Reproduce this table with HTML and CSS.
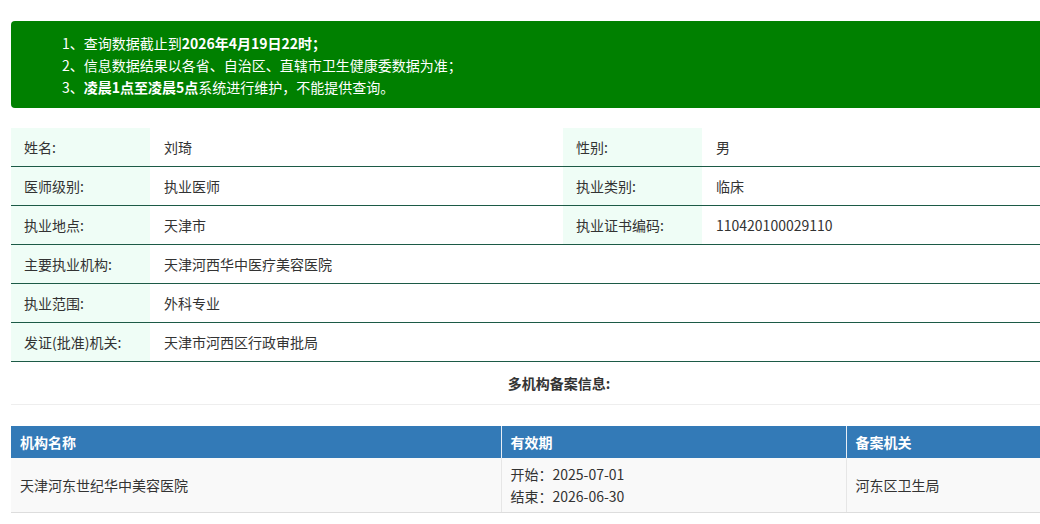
FILE: index.html
```html
<!DOCTYPE html>
<html lang="zh-CN">
<head>
<meta charset="utf-8">
<title>医师执业信息查询</title>
<link rel="stylesheet" href="styles.css">
</head>
<body>
<div class="page">
  <div class="notice">
    <div class="notice-line">1、查询数据截止到<b>2026年4月19日22时；</b></div>
    <div class="notice-line">2、信息数据结果以各省、自治区、直辖市卫生健康委数据为准；</div>
    <div class="notice-line">3、<b>凌晨1点至凌晨5点</b>系统进行维护，不能提供查询。</div>
  </div>

  <table class="info">
    <colgroup>
      <col class="c-label"><col class="c-val1"><col class="c-label"><col class="c-val2">
    </colgroup>
    <tr>
      <td class="lbl">姓名:</td><td class="val">刘琦</td>
      <td class="lbl">性别:</td><td class="val">男</td>
    </tr>
    <tr>
      <td class="lbl">医师级别:</td><td class="val">执业医师</td>
      <td class="lbl">执业类别:</td><td class="val">临床</td>
    </tr>
    <tr>
      <td class="lbl">执业地点:</td><td class="val">天津市</td>
      <td class="lbl">执业证书编码:</td><td class="val">110420100029110</td>
    </tr>
    <tr>
      <td class="lbl">主要执业机构:</td><td class="val" colspan="3">天津河西华中医疗美容医院</td>
    </tr>
    <tr>
      <td class="lbl">执业范围:</td><td class="val" colspan="3">外科专业</td>
    </tr>
    <tr>
      <td class="lbl">发证(批准)机关:</td><td class="val" colspan="3">天津市河西区行政审批局</td>
    </tr>
  </table>

  <div class="section-title">多机构备案信息:</div>

  <table class="multi">
    <colgroup>
      <col class="m1"><col class="m2"><col class="m3">
    </colgroup>
    <thead>
      <tr><th>机构名称</th><th>有效期</th><th>备案机关</th></tr>
    </thead>
    <tbody>
      <tr>
        <td>天津河东世纪华中美容医院</td>
        <td>开始：2025-07-01<br>结束：2026-06-30</td>
        <td>河东区卫生局</td>
      </tr>
    </tbody>
  </table>
</div>
</body>
</html>
```

FILE: styles.css
```css
html, body {
  margin: 0;
  padding: 0;
  background: #fff;
}
body {
  font-family: "Noto Sans CJK SC", "Noto Sans", sans-serif;
  font-size: 14px;
  color: #333;
}
.page {
  width: 1096px;
  padding: 21px 0 0 11px;
}
.notice {
  background: #008000;
  color: #fff;
  border-radius: 4px;
  padding: 11px 0 10px 51px;
  font-size: 14px;
  line-height: 22px;
}
.notice b {
  font-weight: 700;
}
.info {
  width: 100%;
  margin-top: 20px;
  border-collapse: collapse;
  table-layout: fixed;
}
.c-label { width: 139px; }
.c-val1 { width: 413px; }
.c-val2 { width: 405px; }
.info td {
  height: 38px;
  padding: 0 0 0 13px;
  border-bottom: 1px solid #1c5a46;
  line-height: 20px;
  vertical-align: middle;
}
.info td.lbl {
  background: #effdf6;
}
.info td.val {
  padding-left: 14px;
}
.section-title {
  text-align: center;
  font-weight: 700;
  height: 42px;
  line-height: 42px;
  border-bottom: 1px solid #eee;
}
.multi {
  width: 100%;
  margin-top: 21px;
  border-collapse: collapse;
  table-layout: fixed;
}
.m1 { width: 490px; }
.m2 { width: 345px; }
.m3 { width: 261px; }
.multi th {
  background: #337ab7;
  color: #fff;
  font-weight: 700;
  text-align: left;
  padding: 5px 9px;
  line-height: 22px;
  border-left: 1px solid #e8eef5;
}
.multi th:first-child { border-left: none; }
.multi td {
  background: #f9f9f9;
  padding: 5px 9px;
  line-height: 22px;
  border-left: 1px solid #e6e6e6;
  border-bottom: 1px solid #ddd;
  vertical-align: middle;
}
.multi td:first-child { border-left: none; }
```
